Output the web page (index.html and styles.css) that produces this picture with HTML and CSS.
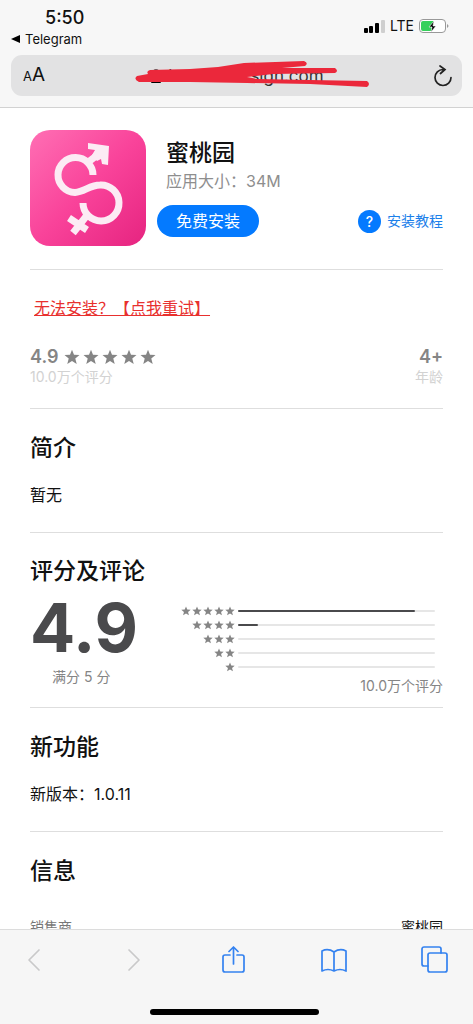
FILE: index.html
```html
<!DOCTYPE html>
<html lang="zh-CN">
<head>
<meta charset="utf-8">
<meta name="viewport" content="width=device-width, initial-scale=1">
<title>蜜桃园</title>
<link rel="stylesheet" href="styles.css">
</head>
<body>
<svg class="defs" aria-hidden="true">
  <symbol id="star" viewBox="0 0 20 20"><path d="M10 1l2.500 6.200 6.900.3-5.300 4.400 1.800 6.700L10 14.900l-5.900 3.700 1.800-6.700L.6 7.500l6.900-.3z"/></symbol>
</svg>

<header class="browser-top">
  <div class="status">
    <div class="status-left">
      <span class="clock">5:50</span>
      <a class="back-app" href="#"><svg width="9" height="8" viewBox="0 0 9 8"><path d="M0 4l9-4v8z"/></svg>Telegram</a>
    </div>
    <div class="status-right">
      <svg width="21" height="14" viewBox="0 0 21 14"><rect x="0" y="9" width="4" height="5" rx="1"/><rect x="5" y="7" width="4" height="7" rx="1"/><rect x="11" y="4" width="4" height="10" rx="1"/><rect x="17" y="1" width="4" height="13" rx="1" fill="#cfcfcf"/></svg>
      <span>LTE</span>
      <svg width="30" height="15" viewBox="0 0 30 15"><rect x=".5" y=".5" width="26" height="13" rx="3.500" fill="#fff" stroke="#999"/><path d="M4 2h11l-3 5 1 5H4a2 2 0 0 1-2-2V4a2 2 0 0 1 2-2z" fill="#35d05b"/><path d="M15 2l-5 6h3l-1 5 5-6h-3z" stroke="#fff" stroke-width=".6"/><path d="M28 5c2 1 2 3 0 4z" fill="#999"/></svg>
    </div>
  </div>
  <div class="address">
    <button class="text-size" aria-label="文字大小"><small>A</small>A</button>
    <div class="url">
      <svg width="12" height="14" viewBox="0 0 12 14"><path d="M3 7V4a3 3 0 0 1 6 0v3" fill="none" stroke="#333" stroke-width="1.500"/><rect x="1" y="6" width="10" height="8" rx="1"/></svg>
      <span>loc</span><span class="url-end">sign.com</span>
      <svg class="scribble" width="236" height="30" viewBox="134 58 236 30"><path d="M150 69L190 68 218 66 244 62 304 60Q309 62 305 65L282 67 335 67Q339 70 335 72L273 73 247 76 257 78 310 79 367 80Q371 83 367 86L310 83 247 82 190 81 139 81Q133 78 137 75L148 73Q146 70 150 69z"/></svg>
    </div>
    <button class="reload" aria-label="重新载入"><svg width="20" height="22" viewBox="0 0 20 22"><path d="M10 4.500a8 8 0 1 0 8 8M7 1l5 3.500-4.500 4"/></svg></button>
  </div>
</header>

<main class="page">
  <section class="app">
    <svg class="app-icon" viewBox="0 0 116 116" role="img" aria-label="蜜桃园">
      <defs><linearGradient id="pink" x1="0" y1="0" x2="1" y2="1"><stop offset="0" stop-color="#ff6fb4"/><stop offset=".5" stop-color="#f9439a"/><stop offset="1" stop-color="#e62480"/></linearGradient></defs>
      <rect width="116" height="116" rx="20" fill="url(#pink)"/>
      <path d="M63 45A17.500 17.500 0 1 0 45 62.500C54 62 60 55 70 55A18 18 0 1 1 53 73M57 33L70 23M58 84L43 103M39 88L57 100" fill="none" stroke="#fcebf4" stroke-width="7"/>
      <path d="M58 13L79 16 78 35 72 34 71 29 67 31 62 25 65 20 58 19z" fill="#fcebf4"/>
    </svg>
    <div class="app-info">
      <h1>蜜桃园</h1>
      <p class="app-size">应用大小：34M</p>
      <div class="app-actions">
        <button class="install">免费安装</button>
        <a class="guide" href="#"><span class="guide-mark">?</span>安装教程</a>
      </div>
    </div>
  </section>

  <section class="summary">
    <a class="retry" href="#">无法安装？【点我重试】</a>
    <div class="facts">
      <div>
        <div class="fact-value">4.9 <span class="stars"><svg><use href="#star"/></svg><svg><use href="#star"/></svg><svg><use href="#star"/></svg><svg><use href="#star"/></svg><svg><use href="#star"/></svg></span></div>
        <div class="fact-label">10.0万个评分</div>
      </div>
      <div class="fact-age">
        <div class="fact-value">4+</div>
        <div class="fact-label">年龄</div>
      </div>
    </div>
  </section>

  <section class="block">
    <h2>简介</h2>
    <p>暂无</p>
  </section>

  <section class="reviews">
    <h2>评分及评论</h2>
    <div class="review-grid">
      <div class="score"><strong>4.9</strong><span>满分 5 分</span></div>
      <div class="histogram">
        <div class="row"><span class="mini"><svg><use href="#star"/></svg><svg><use href="#star"/></svg><svg><use href="#star"/></svg><svg><use href="#star"/></svg><svg><use href="#star"/></svg></span><span class="track"><span class="fill" style="width:90%"></span></span></div>
        <div class="row"><span class="mini"><svg><use href="#star"/></svg><svg><use href="#star"/></svg><svg><use href="#star"/></svg><svg><use href="#star"/></svg></span><span class="track"><span class="fill" style="width:10%"></span></span></div>
        <div class="row"><span class="mini"><svg><use href="#star"/></svg><svg><use href="#star"/></svg><svg><use href="#star"/></svg></span><span class="track"></span></div>
        <div class="row"><span class="mini"><svg><use href="#star"/></svg><svg><use href="#star"/></svg></span><span class="track"></span></div>
        <div class="row"><span class="mini"><svg><use href="#star"/></svg></span><span class="track"></span></div>
        <div class="total">10.0万个评分</div>
      </div>
    </div>
  </section>

  <section class="block">
    <h2>新功能</h2>
    <p>新版本：1.0.11</p>
  </section>

  <section class="block info">
    <h2>信息</h2>
    <dl><dt>销售商</dt><dd>蜜桃园</dd></dl>
  </section>
</main>

<footer class="browser-bottom">
  <nav class="tools">
    <button class="off" aria-label="后退"><svg width="28" height="28" viewBox="0 0 28 28"><path d="M19 4L9 14l10 10"/></svg></button>
    <button class="off" aria-label="前进"><svg width="28" height="28" viewBox="0 0 28 28"><path d="M9 4l10 10L9 24"/></svg></button>
    <button aria-label="共享"><svg width="28" height="28" viewBox="0 0 28 28"><path d="M10 9H5a2 2 0 0 0-2 2v13a2 2 0 0 0 2 2h17a2 2 0 0 0 2-2V11a2 2 0 0 0-2-2h-5M13.500 18V1M9 5.500L13.500 1 18 5.500"/></svg></button>
    <button aria-label="书签"><svg width="28" height="28" viewBox="0 0 28 28"><path d="M14 6Q8 2 2 5v20q6-3 12 0 6-3 12 0V5q-6-3-12 1zV25"/></svg></button>
    <button aria-label="标签页"><svg width="28" height="28" viewBox="0 0 28 28"><path d="M8 20H4a2 2 0 0 1-2-2V3a2 2 0 0 1 2-2h15a2 2 0 0 1 2 2v4"/><rect x="8" y="7" width="19" height="19" rx="2"/></svg></button>
  </nav>
  <div class="home-bar"></div>
</footer>
</body>
</html>
```
FILE: styles.css
```css
* { box-sizing: border-box; }

body {
  margin: 0;
  height: 100vh;
  display: flex;
  flex-direction: column;
  background: #fff;
  color: #111;
  font-family: Inter, "Noto Sans CJK SC", sans-serif;
  font-size: 16px;
  line-height: 24px;
}

h1, h2, p, dl, dd { margin: 0; }
h1, h2 { font-size: 23px; line-height: 32px; font-weight: 500; }
button { border: 0; padding: 0; background: none; font: inherit; color: inherit; }
a { color: inherit; text-decoration: none; }
.defs { position: absolute; width: 0; height: 0; }

/* Browser chrome */
.browser-top {
  flex: none;
  background: #f7f7f7;
  border-bottom: 1px solid #d2d2d2;
  padding: 8px 11px 11px;
}
.status { display: flex; justify-content: space-between; padding-right: 13px; }
.status-left { display: flex; flex-direction: column; }
.clock { padding-left: 34px; font-size: 18px; line-height: 20px; font-weight: 500; }
.back-app { display: flex; align-items: center; gap: 5px; font-size: 13px; line-height: 22px; }
.status-right { display: flex; align-items: center; gap: 5px; height: 36px; font-size: 14px; }

.address {
  display: flex;
  align-items: center;
  margin-top: 5px;
  height: 41px;
  padding: 0 9px 0 12px;
  border-radius: 11px;
  background: #e2e2e3;
}
.text-size { width: 28px; font-size: 19px; text-align: left; white-space: nowrap; }
.text-size small { font-size: 13px; }
.url { flex: 1; position: relative; display: flex; align-items: center; justify-content: center; gap: 6px; padding-right: 10px; font-size: 17px; color: #333; }
.url-end { padding-left: 52px; }
.scribble { position: absolute; top: 50%; left: 50%; transform: translate(-50%, -50%); margin-top: -2px; margin-left: 10px; fill: #eb283b; }
.reload { display: flex; }
.reload svg { fill: none; stroke: #222; stroke-width: 1.7; stroke-linecap: round; }

/* Store page */
.page { flex: 1; min-height: 0; overflow: hidden; padding: 0 30px; }
.page section { border-bottom: 1px solid #dedede; }

.app { display: flex; gap: 11px; padding: 22px 0 23px; }
.app-icon { flex: none; width: 116px; height: 116px; }
.app-info { flex: 1; padding-top: 7px; }
.app-info h1, .app-size { padding-left: 9px; }
.app-size { color: #8e8e8e; }
.app-actions { display: flex; align-items: center; justify-content: space-between; margin-top: 12px; }
.install { width: 102px; height: 32px; border-radius: 16px; background: #047aff; color: #fff; }
.guide { display: flex; align-items: center; gap: 6px; font-size: 14px; color: #1b80ea; }
.guide-mark { width: 23px; height: 23px; border-radius: 50%; background: #047aff; color: #fff; text-align: center; line-height: 23px; font-weight: 500; }

.summary { padding: 26px 0 23px; }
.retry { display: inline-block; margin-left: 4px; color: #e8302e; text-decoration: underline; }
.facts { display: flex; justify-content: space-between; margin-top: 25px; }
.fact-value { display: flex; align-items: center; gap: 6px; font-size: 18px; line-height: 24px; font-weight: 600; color: #858585; }
.fact-label { font-size: 14px; line-height: 16px; color: #d2d2d2; }
.fact-age .fact-value { justify-content: flex-end; }
.stars { display: flex; gap: 3px; }
.stars svg { width: 16px; height: 16px; fill: #858585; }

.block { padding: 23px 0 25px; }
.block p { margin-top: 19px; }

.reviews { padding: 22px 0 9px; }
.review-grid { display: flex; }
.score { width: 151px; display: flex; flex-direction: column; }
.score strong { font-size: 67px; line-height: 82px; font-weight: 700; color: #4a4a4c; }
.score span { padding-left: 22px; font-size: 14px; line-height: 16px; color: #858585; }
.histogram { flex: 1; padding-top: 17px; }
.row { display: flex; align-items: center; height: 14px; gap: 3px; padding-right: 8px; }
.mini { width: 54px; display: flex; justify-content: flex-end; gap: 1px; }
.mini svg { width: 10px; height: 10px; fill: #858585; }
.track { flex: 1; height: 2px; border-radius: 1px; background: #e6e6e6; }
.fill { display: block; height: 2px; border-radius: 1px; background: #4a4a4c; }
.total { text-align: right; font-size: 14px; color: #858585; }

.info dl { display: flex; justify-content: space-between; margin-top: 28px; font-size: 14px; }
.info dt { color: #777; }

/* Toolbar */
.browser-bottom { flex: none; background: #f6f6f6; border-top: 1px solid #dcdcdc; padding: 16px 25px 9px 20px; }
.tools { display: flex; justify-content: space-between; }
.tools button { display: flex; color: #3482f0; }
.tools .off { color: #c9c9ca; }
.tools svg { fill: none; stroke: currentColor; stroke-width: 1.7; stroke-linecap: round; stroke-linejoin: round; }
.home-bar { width: 169px; height: 6px; margin: 35px auto 0; border-radius: 3px; background: #000; }
```
